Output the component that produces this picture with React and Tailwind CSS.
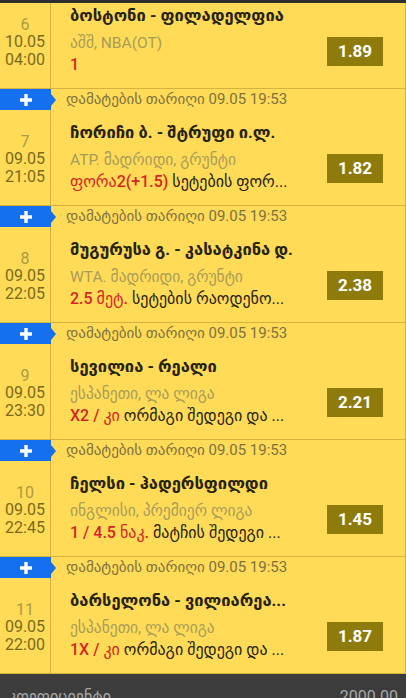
import React from "react";

const matches = [
  { n: 6, date: "10.05", time: "04:00", title: "ბოსტონი - ფილადელფია", league: "აშშ, NBA(OT)", pick: "1", desc: "", odds: "1.89" },
  { n: 7, date: "09.05", time: "21:05", title: "ჩორიჩი ბ. - შტრუფი ი.ლ.", league: "ATP. მადრიდი, გრუნტი", pick: "ფორა2(+1.5)", desc: "სეტების ფორ...", odds: "1.82" },
  { n: 8, date: "09.05", time: "22:05", title: "მუგურუსა გ. - კასატკინა დ.", league: "WTA. მადრიდი, გრუნტი", pick: "2.5 მეტ.", desc: "სეტების რაოდენო...", odds: "2.38" },
  { n: 9, date: "09.05", time: "23:30", title: "სევილია - რეალი", league: "ესპანეთი, ლა ლიგა", pick: "X2 / კი", desc: "ორმაგი შედეგი და ...", odds: "2.21" },
  { n: 10, date: "09.05", time: "22:45", title: "ჩელსი - ჰადერსფილდი", league: "ინგლისი, პრემიერ ლიგა", pick: "1 / 4.5 ნაკ.", desc: "მატჩის შედეგი ...", odds: "1.45" },
  { n: 11, date: "09.05", time: "22:00", title: "ბარსელონა - ვილიარეა...", league: "ესპანეთი, ლა ლიგა", pick: "1X / კი", desc: "ორმაგი შედეგი და ...", odds: "1.87" },
];

function AddedRow() {
  return (
    <div className="flex h-[21px] items-center">
      <div className="relative flex h-full w-[51px] items-center justify-center bg-[#1570ef]">
        <svg width="14" height="14" viewBox="0 0 14 14">
          <path d="M7 1v12M1 7h12" stroke="#fff" strokeWidth="3.4" />
        </svg>
        <span className="absolute right-[-5px] top-1/2 h-0 w-0 -translate-y-1/2 border-y-[6px] border-l-[5px] border-y-transparent border-l-[#1570ef]" />
      </div>
      <div className="pl-[15px] text-[15px] leading-none text-[#7e7140]">დამატების თარიღი 09.05 19:53</div>
    </div>
  );
}

function MatchRow({ m, first }) {
  return (
    <div className={`flex h-[96px] border-b border-[#d6b23e] ${first ? "-mt-[10px]" : ""}`}>
      <div className="flex w-[51px] shrink-0 flex-col items-center justify-center border-r border-[#d6b23e] pt-[3px] text-[16px] leading-[17.5px]">
        <span className="text-[#a99c42]">{m.n}</span>
        <span className="text-[#7a6a1c]">{m.date}</span>
        <span className="text-[#7a6a1c]">{m.time}</span>
      </div>
      <div className="flex min-w-0 flex-1 flex-col pl-[19px] pr-[22px] pt-[12px]">
        <div className="h-[22px] overflow-hidden whitespace-nowrap text-[16.5px] font-bold leading-[22px] text-[#27230f]">{m.title}</div>
        <div className="mt-[5px] flex items-start justify-between">
          <div className="min-w-0 flex-1 overflow-hidden whitespace-nowrap">
            <div className="text-[15.5px] leading-[22px] text-[#a99c58]">{m.league}</div>
            <div className="text-[16px] leading-[22px] text-[#27230f]">
              <span className="font-medium text-[#d42626]">{m.pick}</span>
              {m.desc && <span> {m.desc}</span>}
            </div>
          </div>
          <div className="mt-[5px] flex h-[29px] w-[56px] shrink-0 items-center justify-center bg-[#8e7b0b] text-[17px] font-bold text-white">
            {m.odds}
          </div>
        </div>
      </div>
    </div>
  );
}

export default function App() {
  return (
    <div className="flex h-[698px] w-[406px] flex-col overflow-hidden bg-[#3c3c3c] font-['Roboto','DejaVu_Sans',sans-serif]">
      <div className="h-[3px] shrink-0 bg-[#2e2e2e]" />
      <div className="shrink-0 overflow-hidden border-r border-[#d6b23e] bg-[#ffdb58]">
        {matches.map((m, i) => (
          <div key={m.n}>
            {i > 0 && <AddedRow />}
            <MatchRow m={m} first={i === 0} />
          </div>
        ))}
      </div>
      <div className="flex justify-between px-[8px] pt-[13px] text-[16px] leading-[20px] text-[#a8a8a8]">
        <span>კოეფიციენტი</span>
        <span>2000.00</span>
      </div>
    </div>
  );
}
